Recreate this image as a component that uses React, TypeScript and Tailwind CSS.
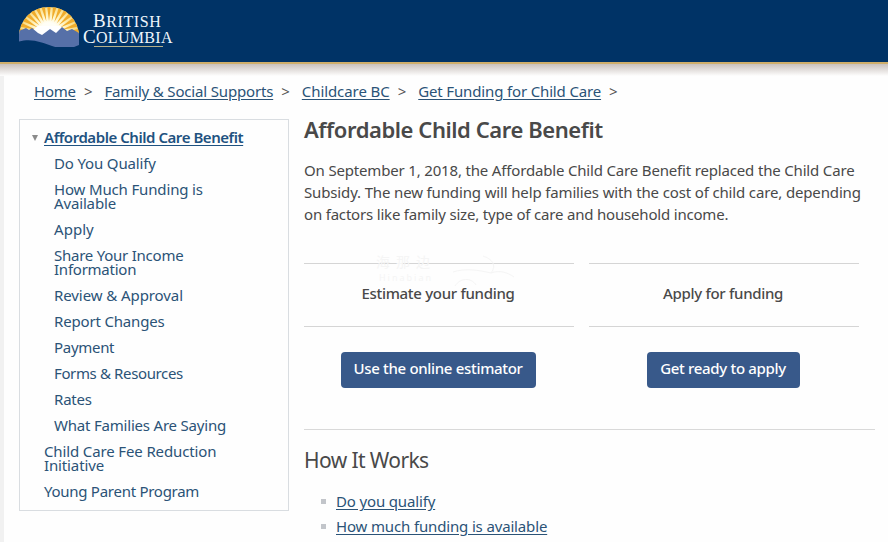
import clsx from "clsx";

interface NavItem {
  label: string;
  level: 1 | 2;
  tracking: string;
  current?: boolean;
}

const breadcrumbs = [
  { label: "Home", tracking: "tracking-[-0.2px]" },
  { label: "Family & Social Supports", tracking: "tracking-[-0.17px]" },
  { label: "Childcare BC", tracking: "tracking-[-0.08px]" },
  { label: "Get Funding for Child Care", tracking: "tracking-[-0.15px]" },
];

const navItems: NavItem[] = [
  { label: "Affordable Child Care Benefit", level: 1, tracking: "tracking-[-0.45px]", current: true },
  { label: "Do You Qualify", level: 2, tracking: "tracking-[-0.15px]" },
  { label: "How Much Funding is Available", level: 2, tracking: "tracking-[-0.15px]" },
  { label: "Apply", level: 2, tracking: "tracking-[0.05px]" },
  { label: "Share Your Income Information", level: 2, tracking: "tracking-[-0.24px]" },
  { label: "Review & Approval", level: 2, tracking: "tracking-[-0.08px]" },
  { label: "Report Changes", level: 2, tracking: "tracking-[-0.17px]" },
  { label: "Payment", level: 2, tracking: "tracking-[-0.3px]" },
  { label: "Forms & Resources", level: 2, tracking: "tracking-[-0.37px]" },
  { label: "Rates", level: 2, tracking: "tracking-[-0.2px]" },
  { label: "What Families Are Saying", level: 2, tracking: "tracking-[-0.2px]" },
  { label: "Child Care Fee Reduction Initiative", level: 1, tracking: "tracking-[-0.13px]" },
  { label: "Young Parent Program", level: 1, tracking: "tracking-[-0.27px]" },
];

const rays = [-84, -72, -60, -48, -36, -24, -12, 0, 12, 24, 36, 48, 60, 72, 84];

const Logo = () => (
  <div className="flex items-start">
    <svg width="60" height="40" viewBox="0 0 60 40" className="block">
      <defs>
        <clipPath id="sun">
          <path d="M0 40V27C2 11 14 0 30 0s28 11 30 27v13z" />
        </clipPath>
        <radialGradient id="glow" cx="30" cy="26" r="29" gradientUnits="userSpaceOnUse">
          <stop offset="0.35" stopColor="#fffef6" />
          <stop offset="0.6" stopColor="#fff3c0" />
          <stop offset="1" stopColor="#f8d77a" />
        </radialGradient>
      </defs>
      <g clipPath="url(#sun)">
        <path d="M0 0h60v30H0z" fill="url(#glow)" />
        {rays.map((angle) => (
          <path key={angle} d="M30 14L27.800 -4h4.400z" fill="#f0ac2b" transform={`rotate(${angle} 30 27)`} />
        ))}
        <path d="M14 23l5-4h22l3 3-6 7-8-4-8 5z" fill="#fff" />
        <path
          d="M0 24l7-3 3 2 3-2 6 5 4 2 8-6 6 4 6-6 5 4 5-2 7 4v12c-8 4-17 4.500-27 1S13 31 0 34.500z"
          fill="#5670a8"
        />
      </g>
    </svg>
    <div className="ml-[4px] mt-[6px] font-['Liberation_Serif',serif] text-[16px] leading-[15px] text-[#eef6fc]">
      <div className="pl-[10px] tracking-[0.6px]">
        <span className="text-[19px] leading-[15px]">B</span>RITISH
      </div>
      <div className="tracking-[0.3px]">
        <span className="text-[19px] leading-[15px]">C</span>OLUMBIA
      </div>
      <div className="ml-[11px] mt-px h-px w-[69px] bg-[#b5b08a]" />
    </div>
  </div>
);

const SideNav = () => (
  <nav className="h-[392px] w-[270px] shrink-0 border border-[#d9dde1] py-1">
    <ul>
      {navItems.map((item) => (
        <li
          key={item.label}
          className={clsx(
            "flex py-[6px] leading-[14px]",
            item.current ? "pl-3" : "pr-[50px]",
            !item.current && (item.level === 1 ? "pl-6" : "pl-[34px]"),
          )}
        >
          {item.current && (
            <svg width="6" height="6" viewBox="0 0 6 6" className="mr-[6px] mt-[5px] shrink-0">
              <path d="M0 0h6L3 6z" fill="#8b8b8b" />
            </svg>
          )}
          <a
            className={clsx(
              item.tracking,
              item.current
                ? "whitespace-nowrap font-semibold text-[#1f5280] underline underline-offset-2"
                : "text-[#2b5377]",
            )}
          >
            {item.label}
          </a>
        </li>
      ))}
    </ul>
  </nav>
);

interface FundingColumnProps {
  title: string;
  action: string;
  width: string;
}

const FundingColumn = ({ title, action, width }: FundingColumnProps) => (
  <div className="w-[270px]">
    <h3 className="flex h-16 items-center justify-center border-y border-[#d5d5d5] pb-[4px] pr-[2px] font-medium leading-[18px] tracking-[-0.3px]">
      {title}
    </h3>
    <div className="flex justify-center pr-[2px] pt-[25px]">
      <button className={clsx("h-9 whitespace-nowrap rounded-[4px] bg-[#38598a] pb-[3px] font-medium tracking-[-0.32px] text-white", width)}>
        {action}
      </button>
    </div>
  </div>
);

const Watermark = () => (
  <div className="pointer-events-none absolute left-[67px] top-[-12px] flex text-[#f5f5f5]">
    <div className="w-[70px] text-center">
      <div className="font-['Noto_Sans_CJK_SC',sans-serif] text-[14px] leading-[21px] tracking-[6px]">海那边</div>
      <div className="font-['Noto_Sans',sans-serif] text-[9px] leading-[12px] tracking-[2px]">Hinabian</div>
    </div>
    <svg width="70" height="34" viewBox="0 0 70 34" fill="none" stroke="currentColor" className="ml-3 mt-1">
      <path d="M0 17c12-4 25-2 38 1 6-8 1-14-8-17M38 18c8-3 16-1 23 4M2 31c5-8 16-9 21-1" />
    </svg>
  </div>
);

export default function App() {
  return (
    <div className="h-[542px] w-[888px] overflow-hidden bg-[#fefefe] font-['Noto_Sans',sans-serif] text-[15px] text-[#494949]">
      <header className="h-16 border-b-2 border-[#cfae6a] bg-[#003366] pl-[19px] pt-[7px]">
        <Logo />
      </header>
      <div className="h-3 bg-linear-to-b from-[#c9c1bc] to-[#fefefe]" />
      <div className="h-[466px] border-l-4 border-[#f1f1f1] pl-[15px] pt-1">
        <div className="flex h-[22px] items-center pl-[15px]">
          {breadcrumbs.map((crumb) => (
            <div key={crumb.label} className="flex whitespace-nowrap">
              <a className={clsx("text-[#2b5377] underline underline-offset-2", crumb.tracking)}>{crumb.label}</a>
              <span className="ml-2 mr-3 text-[#555]">&gt;</span>
            </div>
          ))}
        </div>
        <div className="mt-[17px] flex">
          <SideNav />
          <main className="ml-[15px] w-[571px]">
            <h1 className="-mt-px h-[41px] whitespace-nowrap text-[22px] font-semibold leading-[22px] tracking-[-0.43px]">
              Affordable Child Care Benefit
            </h1>
            <p className="whitespace-nowrap leading-[22px] tracking-[-0.17px]">
              On September 1, 2018, the Affordable Child Care Benefit replaced the Child Care
              <br />
              <span className="tracking-[-0.145px]">
                Subsidy. The new funding will help families with the cost of child care, depending
              </span>
              <br />
              <span className="tracking-[-0.19px]">on factors like family size, type of care and household income.</span>
            </p>
            <div className="relative mt-[38px] flex gap-[15px]">
              <Watermark />
              <FundingColumn title="Estimate your funding" action="Use the online estimator" width="w-[195px]" />
              <FundingColumn title="Apply for funding" action="Get ready to apply" width="w-[153px]" />
            </div>
            <hr className="mt-[41px] border-[#d9d9d9]" />
            <h2 className="mt-[18px] text-[21px] leading-6 tracking-[-0.6px]">How It Works</h2>
            <ul className="mt-[17px] pl-[17px] leading-[25px] tracking-[-0.15px]">
              {["Do you qualify", "How much funding is available"].map((label) => (
                <li key={label} className="flex items-center">
                  <span className="mr-[10px] size-[5px] bg-[#c2c5ca]" />
                  <a className="text-[#2b5377] underline underline-offset-2">{label}</a>
                </li>
              ))}
            </ul>
          </main>
        </div>
      </div>
    </div>
  );
}
